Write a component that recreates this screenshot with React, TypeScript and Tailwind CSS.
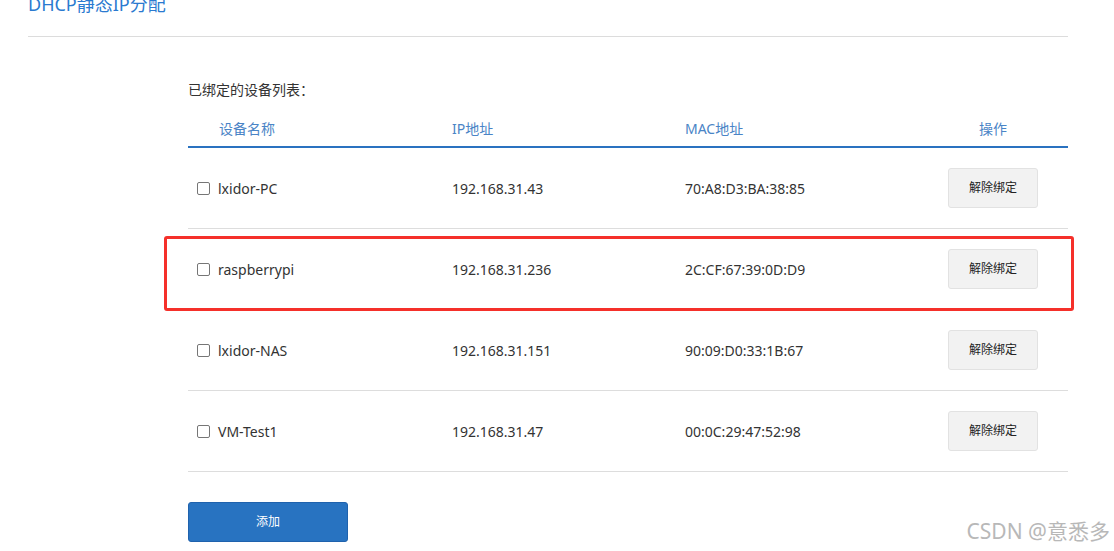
import React from "react";

type Device = { name: string; ip: string; mac: string };

const devices: Device[] = [
  { name: "lxidor-PC", ip: "192.168.31.43", mac: "70:A8:D3:BA:38:85" },
  { name: "raspberrypi", ip: "192.168.31.236", mac: "2C:CF:67:39:0D:D9" },
  { name: "lxidor-NAS", ip: "192.168.31.151", mac: "90:09:D0:33:1B:67" },
  { name: "VM-Test1", ip: "192.168.31.47", mac: "00:0C:29:47:52:98" },
];

const font = {
  fontFamily: '"Noto Sans", "Noto Sans CJK SC", sans-serif',
};

export default function App() {
  return (
    <div className="relative h-[551px] w-[1114px] overflow-hidden bg-white" style={font}>
      <div className="mx-[28px] w-[1040px]">
        <div className="-mt-[8px] h-[45px] border-b border-[#dcdcdc] text-[18px] leading-[24px] text-[#2a7ad0]">
          DHCP静态IP分配
        </div>

        <div className="ml-[160px] w-[880px]">
          <div className="mt-[43px] text-[14px] leading-[20px] text-[#333]">已绑定的设备列表：</div>

          <div className="mt-[10px] grid h-[38px] grid-cols-[264px_233px_233px_1fr] items-center border-b-2 border-[#2a72c0] text-[14px] text-[#4a84c6]">
            <div className="pl-[31px]">设备名称</div>
            <div>IP地址</div>
            <div>MAC地址</div>
            <div className="text-center">操作</div>
          </div>

          {devices.map((d, i) => (
            <div
              key={d.name}
              className="relative grid h-[81px] grid-cols-[264px_233px_233px_1fr] items-center border-b border-[#dddddd] text-[14px] text-[#333]"
            >
              <label className="flex items-center gap-[8px] pl-[9px]">
                <span className="h-[13px] w-[13px] rounded-[2px] border border-[#767676] bg-white" />
                <span>{d.name}</span>
              </label>
              <div>{d.ip}</div>
              <div>{d.mac}</div>
              <div className="flex justify-center">
                <button className="h-[40px] w-[90px] rounded-[3px] border border-[#e2e2e2] bg-[#f2f2f2] text-[12px] text-[#222]">
                  解除绑定
                </button>
              </div>
              {i === 1 && (
                <div className="pointer-events-none absolute -left-[24px] -right-[6px] top-[7px] -bottom-[2px] rounded-[3px] border-[3px] border-[#f5302a]" />
              )}
            </div>
          ))}

          <button className="mt-[30px] h-[40px] w-[160px] rounded-[3px] border border-[#1f62ad] bg-[#2873c1] text-[12px] text-white">
            添加
          </button>
        </div>
      </div>

      <div className="absolute bottom-[7px] right-[4px] text-[21px] leading-[26px] text-[#b8b8b8]">CSDN @意悉多</div>
    </div>
  );
}
